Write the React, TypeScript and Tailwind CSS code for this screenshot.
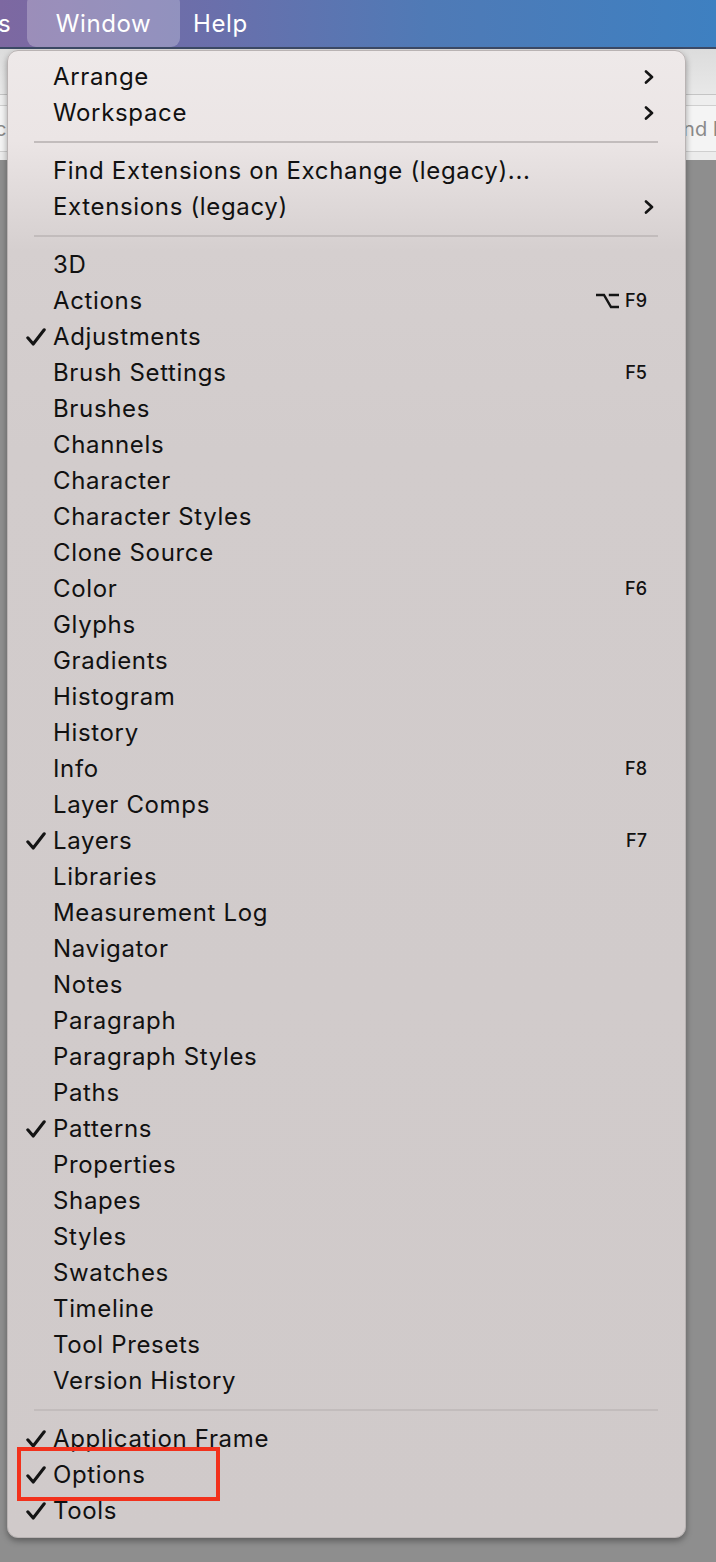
import React from "react";

type Item =
  | { type: "sep" }
  | { type: "item"; label: string; checked?: boolean; sub?: boolean; shortcut?: string; opt?: boolean; boxed?: boolean };

const I = (label: string, extra: Partial<Omit<Extract<Item, { type: "item" }>, "type" | "label">> = {}): Item => ({
  type: "item",
  label,
  ...extra,
});

const items: Item[] = [
  I("Arrange", { sub: true }),
  I("Workspace", { sub: true }),
  { type: "sep" },
  I("Find Extensions on Exchange (legacy)..."),
  I("Extensions (legacy)", { sub: true }),
  { type: "sep" },
  I("3D"),
  I("Actions", { shortcut: "F9", opt: true }),
  I("Adjustments", { checked: true }),
  I("Brush Settings", { shortcut: "F5" }),
  I("Brushes"),
  I("Channels"),
  I("Character"),
  I("Character Styles"),
  I("Clone Source"),
  I("Color", { shortcut: "F6" }),
  I("Glyphs"),
  I("Gradients"),
  I("Histogram"),
  I("History"),
  I("Info", { shortcut: "F8" }),
  I("Layer Comps"),
  I("Layers", { checked: true, shortcut: "F7" }),
  I("Libraries"),
  I("Measurement Log"),
  I("Navigator"),
  I("Notes"),
  I("Paragraph"),
  I("Paragraph Styles"),
  I("Paths"),
  I("Patterns", { checked: true }),
  I("Properties"),
  I("Shapes"),
  I("Styles"),
  I("Swatches"),
  I("Timeline"),
  I("Tool Presets"),
  I("Version History"),
  { type: "sep" },
  I("Application Frame", { checked: true }),
  I("Options", { checked: true, boxed: true }),
  I("Tools", { checked: true }),
];

function Check() {
  return (
    <svg width="20" height="18" viewBox="0 0 20 18" className="shrink-0">
      <path d="M1.8 9.8 L7.2 16 L18.2 1.8" fill="none" stroke="#141414" strokeWidth="3.1" strokeLinecap="round" strokeLinejoin="round" />
    </svg>
  );
}

function Chevron() {
  return (
    <svg width="10" height="14" viewBox="0 0 10 14">
      <path d="M2 1.5 L8 7 L2 12.5" fill="none" stroke="#141414" strokeWidth="2.6" strokeLinecap="round" strokeLinejoin="round" />
    </svg>
  );
}

function OptKey() {
  return (
    <svg width="23" height="16" viewBox="0 0 23 16" className="mr-[6px]">
      <path d="M1 2 H8 L15 14 H22 M14 2 H22" fill="none" stroke="#141414" strokeWidth="2.4" strokeLinecap="square" />
    </svg>
  );
}

export default function App() {
  return (
    <div
      className="relative w-[716px] h-[1562px] overflow-hidden bg-[#8e8e8e]"
      style={{ fontFamily: "Inter, 'Noto Sans', 'Liberation Sans', sans-serif" }}
    >
      {/* menu bar */}
      <div className="h-[49px] border-b-[2px] border-[#3c4a66] bg-[linear-gradient(to_right,#7d68a1_0%,#6a6fab_30%,#4f7ab6_60%,#3e80c1_100%)] flex items-start text-white text-[24px] leading-none tracking-[0.6px]">
        <div className="w-[27px] h-[47px] flex items-center overflow-hidden">
          <span className="-ml-[2px]">s</span>
        </div>
        <div className="w-[153px] h-[53px] -mt-[6px] pt-[6px] rounded-[9px] bg-white/25 flex items-center justify-center">
          <span>Window</span>
        </div>
        <div className="h-[47px] flex items-center pl-[13px]">Help</div>
      </div>

      {/* background toolbar */}
      <div className="flex flex-col">
        <div className="h-[46px] bg-[linear-gradient(to_bottom,#dcdcdc,#e8e8e8)] border-b border-[#c4c4c4]" />
        <div className="h-[11px] bg-[#eeeeee] border-b border-[#cfcfcf]" />
        <div className="h-[46px] bg-[#f4f4f4] border-b border-[#cfcfcf] flex items-center text-[20px] text-[#8a8a8a] overflow-hidden whitespace-nowrap">
          <span className="-ml-[5px]">c</span>
          <span className="ml-[660px]">Find Name</span>
        </div>
        <div className="h-[8px] bg-[#ececec]" />
        <div className="flex-1 bg-[linear-gradient(to_right,#8a8a8a,#959595)]" />
      </div>

      {/* menu */}
      <div className="absolute left-[7px] top-[50px] w-[679px] h-[1488px] rounded-[11px] border border-[#b9b3b3] shadow-[0_3px_6px_rgba(0,0,0,0.35)] bg-[linear-gradient(to_bottom,#eee9e9_0px,#ebe5e5_90px,#d5cfcf_200px,#d2cccc_400px,#d0caca_100%)] py-[8px] text-[24px] text-[#111111] leading-none">
        {items.map((it, i) =>
          it.type === "sep" ? (
            <div key={i} className="h-[22px] flex items-center pl-[26px] pr-[27px]">
              <div className="h-[2px] w-full bg-[#c2bcbc]" />
            </div>
          ) : (
            <div key={i} className="relative h-[36px] flex items-center">
              <div className="w-[45px] flex items-center justify-end pr-[7px]">{it.checked ? <Check /> : null}</div>
              <span className="flex-1 tracking-[0.65px]">{it.label}</span>
              {it.sub ? (
                <div className="w-[42px] flex justify-start pl-[1px]">
                  <Chevron />
                </div>
              ) : null}
              {it.shortcut ? (
                <div className="flex items-center pr-[38px] text-[18px] font-medium">
                  {it.opt ? <OptKey /> : null}
                  <span>{it.shortcut}</span>
                </div>
              ) : null}
              {it.boxed ? (
                <div className="absolute left-[9px] top-[-10px] w-[203px] h-[54px] border-[4px] border-[#f2311c]" />
              ) : null}
            </div>
          )
        )}
      </div>
    </div>
  );
}
